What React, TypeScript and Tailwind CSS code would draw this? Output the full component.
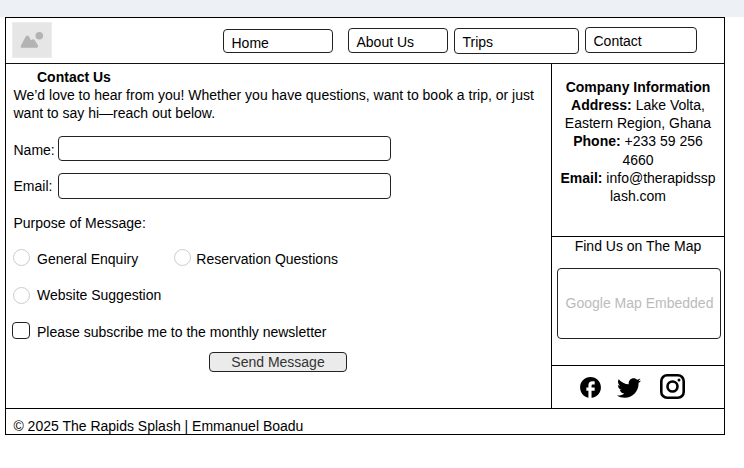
import React from "react";
import { MdFacebook } from "react-icons/md";
import { FaTwitter } from "react-icons/fa";

function Logo() {
  return (
    <svg className="ml-[6px] mt-[4px] h-[36px] w-[40px] shrink-0" viewBox="0 0 40 36">
      <rect x="0.5" y="0.5" width="39" height="35" fill="#e6e6e6" stroke="#ececec" />
      <circle cx="27.3" cy="13.8" r="3.8" fill="#b3b3b3" />
      <path
        d="M9 23.4 L13.6 14.8 Q15.3 12.4 17.1 14.8 L19.1 18.4 L20.2 17.6 Q21.9 16.6 23 18.4 L26 23.4 Q26.6 25.7 24.8 25.7 H10.2 Q8.2 25.7 9 23.4 Z"
        fill="#b3b3b3"
      />
    </svg>
  );
}

function Instagram() {
  return (
    <svg className="h-[25px] w-[25px]" viewBox="0 0 25 25" fill="none" stroke="#000">
      <rect x="1.3" y="1.3" width="22.4" height="22.4" rx="5.8" strokeWidth="2.6" />
      <circle cx="12.5" cy="12.5" r="5" strokeWidth="2.6" />
      <circle cx="19" cy="6.1" r="1.5" fill="#000" stroke="none" />
    </svg>
  );
}

function NavItem({ label, className }: { label: string; className: string }) {
  return (
    <a className={"block shrink-0 rounded-[4px] border border-[#222] pl-[7.5px] pt-[4px] " + className}>
      {label}
    </a>
  );
}

function Radio({ className }: { className: string }) {
  return <span className={"h-[17px] w-[17px] shrink-0 rounded-full border border-[#ccc] " + className} />;
}

export default function App() {
  return (
    <div className="h-[468px] w-[744px] overflow-hidden bg-white font-['Liberation_Sans',Arial,sans-serif] text-[14px] leading-[18px] text-black">
      <div className="h-[17px] bg-[#edf0f5]" />
      <div className="ml-[5px] flex h-[418px] w-[720px] flex-col border border-black">
        <header className="flex h-[46px] shrink-0 items-start border-b border-[#111]">
          <Logo />
          <nav className="ml-[171px] flex items-start">
            <NavItem label="Home" className="mt-[11px] h-[24px] w-[110px]" />
            <NavItem label="About Us" className="ml-[15px] mt-[10px] h-[25px] w-[100px]" />
            <NavItem label="Trips" className="ml-[6px] mt-[10px] h-[26px] w-[125px]" />
            <NavItem label="Contact" className="ml-[6px] mt-[9px] h-[26px] w-[112px]" />
          </nav>
        </header>

        <div className="flex h-[344px] shrink-0">
          <main className="w-[545px] shrink-0 pl-[7px] pt-[4px]">
            <h1 className="pl-[24px] font-bold">Contact Us</h1>
            <p className="w-[535px] pl-[0.5px]">
              We’d love to hear from you! Whether you have questions, want to book a trip, or just
              <br />
              want to say hi—reach out below.
            </p>
            <form>
              <label className="mt-[14px] flex h-[25px]">
                <span className="w-[45px] shrink-0 pl-[0.5px] pt-[5px]">Name:</span>
                <input className="h-[25px] w-[333px] rounded-[4px] border border-[#222]" />
              </label>
              <label className="mt-[12px] flex h-[26px]">
                <span className="w-[45px] shrink-0 pl-[0.5px] pt-[4px]">Email:</span>
                <input className="h-[26px] w-[333px] rounded-[4px] border border-[#222]" />
              </label>
              <p className="mt-[15px] pl-[0.5px]">Purpose of Message:</p>
              <div className="mt-[17px] flex h-[19px]">
                <label className="flex w-[161px]">
                  <Radio className="mr-[7px]" />
                  <span className="pt-px">General Enquiry</span>
                </label>
                <label className="flex">
                  <Radio className="mr-[5.3px]" />
                  <span className="pt-px">Reservation Questions</span>
                </label>
              </div>
              <label className="mt-[18px] flex">
                <Radio className="mr-[7px] mt-px" />
                <span>Website Suggestion</span>
              </label>
              <label className="mt-[18px] flex">
                <span className="-ml-px mr-[7px] h-[17px] w-[18px] shrink-0 rounded-[4px] border border-[#222]" />
                <span className="pt-px">Please subscribe me to the monthly newsletter</span>
              </label>
              <button
                type="button"
                className="ml-[196px] mt-[11px] block h-[20px] w-[138px] rounded-[4px] border border-[#222] bg-[#ebebeb] text-center leading-[18px] text-[#333]"
              >
                Send Message
              </button>
            </form>
          </main>

          <aside className="flex w-[173px] shrink-0 flex-col border-l border-black">
            <section className="h-[173px] shrink-0 border-b border-black pt-[13.8px] text-center leading-[18.2px]">
              <h2 className="font-bold">Company Information</h2>
              <p>
                <b>Address:</b> Lake Volta,
                <br />
                Eastern Region, Ghana
              </p>
              <p>
                <b>Phone:</b> +233 59 256
                <br />
                4660
              </p>
              <p>
                <b>Email:</b> info@therapidssp
                <br />
                lash.com
              </p>
            </section>
            <section className="h-[129px] shrink-0 border-b border-black text-center">
              <h2>Find Us on The Map</h2>
              <div className="ml-[5px] mt-[13px] h-[71px] w-[164px] rounded-[4px] border border-[#222] pl-px pt-[25px] text-[#bbb]">
                Google Map Embedded
              </div>
            </section>
            <section className="flex pl-[26px] pt-[8px]">
              <MdFacebook className="mt-px h-[25px] w-[25px]" />
              <FaTwitter className="ml-[14px] mt-[1.5px] h-[24px] w-[24px]" />
              <div className="ml-[19px]">
                <Instagram />
              </div>
            </section>
          </aside>
        </div>

        <footer className="border-t border-black pl-[7.4px] pt-[8px]">
          © 2025 The Rapids Splash | Emmanuel Boadu
        </footer>
      </div>
    </div>
  );
}
